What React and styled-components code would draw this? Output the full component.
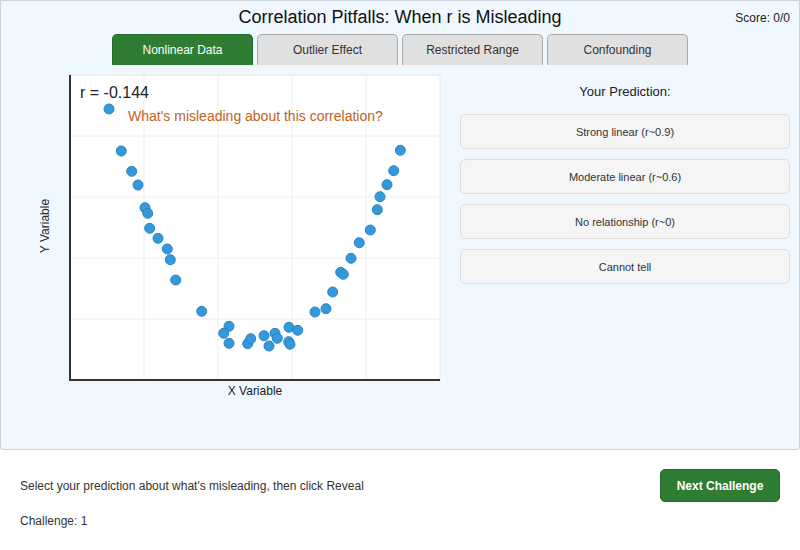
import React from "react";
import styled, { createGlobalStyle } from "styled-components";

const GlobalStyle = createGlobalStyle`
  body {
    margin: 0;
    font-family: "Liberation Sans", Arial, sans-serif;
    color: #333;
    background: #fff;
  }
`;

const Panel = styled.div`
  box-sizing: border-box;
  width: 800px;
  height: 450px;
  background: #f0f8ff;
  border: 1px solid #ccd3db;
  border-radius: 0 0 3px 3px;
`;

const TitleRow = styled.div`
  display: grid;
  grid-template-columns: 1fr auto 1fr;
  align-items: center;
  height: 33px;
  padding: 0 9px;
`;

const Title = styled.h1`
  grid-column: 2;
  margin: 0;
  font-size: 18px;
  font-weight: normal;
  color: #111;
`;

const Score = styled.div`
  justify-self: end;
  font-size: 12px;
  color: #222;
`;

const Tabs = styled.div`
  display: flex;
  justify-content: center;
  gap: 4px;
`;

const Tab = styled.button`
  box-sizing: border-box;
  width: 141px;
  height: 31px;
  border: 1px solid ${(p) => (p.$active ? "#25692a" : "#aaa")};
  border-bottom: none;
  border-radius: 5px 5px 0 0;
  background: ${(p) => (p.$active ? "#2e7d32" : "#e0e0e0")};
  color: ${(p) => (p.$active ? "#fff" : "#333")};
  font-family: inherit;
  font-size: 12px;
  padding: 0;
`;

const Body = styled.div`
  display: flex;
  margin-top: 4px;
`;

const Chart = styled.svg`
  display: block;
  width: 450px;
  height: 335px;
`;

const Side = styled.div`
  width: 330px;
  margin-left: 9px;
  display: flex;
  flex-direction: column;
  gap: 10px;
`;

const SideTitle = styled.div`
  text-align: center;
  font-size: 13px;
  color: #222;
  margin-top: 15px;
  margin-bottom: 5px;
`;

const Choice = styled.button`
  box-sizing: border-box;
  height: 35px;
  width: 100%;
  border: 1px solid #ddd;
  border-radius: 5px;
  background: #f5f5f5;
  color: #333;
  font-family: inherit;
  font-size: 11px;
`;

const Footer = styled.div`
  padding: 19px 20px 0 20px;
`;

const FooterRow = styled.div`
  display: flex;
  align-items: center;
  justify-content: space-between;
`;

const Hint = styled.div`
  font-size: 12px;
  color: #333;
`;

const NextButton = styled.button`
  box-sizing: border-box;
  width: 120px;
  height: 33px;
  border: 1px solid #25692a;
  border-radius: 5px;
  background: #2e7d32;
  color: #fff;
  font-family: inherit;
  font-size: 12px;
  font-weight: bold;
`;

const Counter = styled.div`
  font-size: 12px;
  color: #333;
  margin-top: 12px;
`;

const points = [
  [109, 109], [121.3, 151], [131.7, 171.3], [138, 185], [145, 207.7],
  [147.7, 213.3], [149.7, 228.3], [158, 238.3], [167.3, 249], [170.3, 259.7],
  [175.7, 280], [201.7, 311.3], [229, 326.3], [223.7, 333.3], [229, 343.3],
  [247.7, 343.7], [250.7, 338.7], [264, 335.7], [269, 346], [275, 333.3],
  [277.3, 338.3], [288.7, 341.7], [290, 344.3], [289, 327.3], [297.7, 330.3],
  [315, 312], [326, 308.7], [332.7, 292], [340.7, 272.3], [343.3, 274.3],
  [351, 258.3], [359.3, 242.7], [370.3, 230], [377.3, 209.7], [380, 196.7],
  [387, 184.7], [393.7, 170.7], [400.3, 150.3],
];

const gridX = [144, 218, 292, 366];
const gridY = [136, 197, 258, 319];

const tabs = ["Nonlinear Data", "Outlier Effect", "Restricted Range", "Confounding"];
const choices = [
  "Strong linear (r~0.9)",
  "Moderate linear (r~0.6)",
  "No relationship (r~0)",
  "Cannot tell",
];

const Scatter = () => (
  <Chart viewBox="1 69 450 335">
    <rect x="70" y="75" width="370" height="305" fill="#fff" stroke="#e4e8ec" />
    {gridX.map((x) => (
      <line key={x} x1={x} y1="75" x2={x} y2="380" stroke="#eee" />
    ))}
    {gridY.map((y) => (
      <line key={y} x1="70" y1={y} x2="440" y2={y} stroke="#eee" />
    ))}
    <line x1="70" y1="75" x2="70" y2="381" stroke="#333" strokeWidth="2" />
    <line x1="69" y1="380" x2="440" y2="380" stroke="#333" strokeWidth="2" />
    {points.map(([x, y], i) => (
      <circle key={i} cx={x} cy={y} r="5" fill="#3498db" stroke="#2a84c4" />
    ))}
    <text x="80" y="98" fontSize="16" fill="#222">r = -0.144</text>
    <text x="128" y="121" fontSize="14" fill="#c2621d">
      What's misleading about this correlation?
    </text>
    <text x="255" y="395" fontSize="12" fill="#222" textAnchor="middle">
      X Variable
    </text>
    <text
      x="0"
      y="0"
      fontSize="12"
      fill="#222"
      textAnchor="middle"
      transform="translate(49 226) rotate(-90)"
    >
      Y Variable
    </text>
  </Chart>
);

export default function App() {
  return (
    <>
      <GlobalStyle />
      <Panel>
        <TitleRow>
          <Title>Correlation Pitfalls: When r is Misleading</Title>
          <Score>Score: 0/0</Score>
        </TitleRow>
        <Tabs>
          {tabs.map((t, i) => (
            <Tab key={t} $active={i === 0}>
              {t}
            </Tab>
          ))}
        </Tabs>
        <Body>
          <Scatter />
          <Side>
            <SideTitle>Your Prediction:</SideTitle>
            {choices.map((c) => (
              <Choice key={c}>{c}</Choice>
            ))}
          </Side>
        </Body>
      </Panel>
      <Footer>
        <FooterRow>
          <Hint>Select your prediction about what's misleading, then click Reveal</Hint>
          <NextButton>Next Challenge</NextButton>
        </FooterRow>
        <Counter>Challenge: 1</Counter>
      </Footer>
    </>
  );
}
